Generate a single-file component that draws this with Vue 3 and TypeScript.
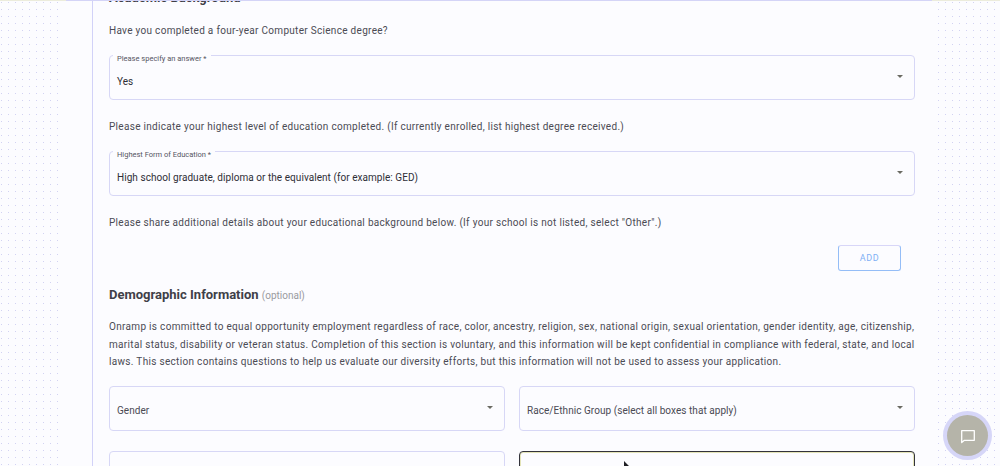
<script setup lang="ts">
interface Option {
  label: string
}

const demographics: Option[] = [
  { label: 'Gender' },
  { label: 'Race/Ethnic Group (select all boxes that apply)' }
]
</script>

<template>
  <div class="page">
    <div class="rule"></div>
    <div class="body">
      <div class="side"></div>
      <main class="panel">
        <div class="content">
          <h2 class="heading first">Academic Background</h2>
          <p class="question">Have you completed a four-year Computer Science degree?</p>
          <div class="select">
            <span class="float">Please specify an answer *</span>
            <span class="value">Yes</span>
            <i class="caret"></i>
          </div>
          <p class="question">Please indicate your highest level of education completed. (If currently enrolled, list highest degree received.)</p>
          <div class="select">
            <span class="float">Highest Form of Education *</span>
            <span class="value">High school graduate, diploma or the equivalent (for example: GED)</span>
            <i class="caret"></i>
          </div>
          <p class="question">Please share additional details about your educational background below. (If your school is not listed, select "Other".)</p>
          <div class="actions"><button class="add" type="button">ADD</button></div>
          <h2 class="heading demo">Demographic Information <span class="optional">(optional)</span></h2>
          <p class="blurb">Onramp is committed to equal opportunity employment regardless of race, color, ancestry, religion, sex, national origin, sexual orientation, gender identity, age, citizenship, marital status, disability or veteran status. Completion of this section is voluntary, and this information will be kept confidential in compliance with federal, state, and local laws. This section contains questions to help us evaluate our diversity efforts, but this information will not be used to assess your application.</p>
          <div class="grid">
            <div v-for="item in demographics" :key="item.label" class="select plain">
              <span class="value muted">{{ item.label }}</span>
              <i class="caret"></i>
            </div>
            <div class="select plain"></div>
            <div class="select plain focused"></div>
          </div>
        </div>
      </main>
      <div class="side"></div>
    </div>
    <svg class="cursor" width="12" height="16" viewBox="0 0 12 16"><path d="M0 0v14l3.4-3.2 2.4 5 2-1-2.3-4.8H10z" fill="#1f1f24" /></svg>
    <button class="chat" type="button" aria-label="Chat">
      <svg width="16" height="16" viewBox="0 0 16 16" fill="none"><path d="M1.7 2.7h12.6v9.6H4.4L1.7 14.6z" stroke="#fff" stroke-width="1.3" stroke-linejoin="round" /></svg>
    </button>
  </div>
</template>

<style>
html,
body {
  margin: 0;
  overflow: hidden;
}
</style>

<style scoped>
.page {
  position: relative;
  height: 466px;
  overflow: hidden;
  background: #fcfcff;
  font-family: Roboto, "Liberation Sans", sans-serif;
  color: #4b4b54;
}

.rule {
  height: 1px;
  background: linear-gradient(90deg, #ececdc 66px, #d4d4f7 66px, #d4d4f7 932px, #ececdc 932px);
}

.body {
  display: flex;
  justify-content: space-between;
  height: 465px;
}

.side {
  width: 63px;
  background-image: radial-gradient(circle at 1.5px 1.5px, #d2d2f2 0.7px, transparent 0.75px);
  background-size: 7px 7px;
}

.panel {
  box-sizing: border-box;
  width: 845px;
  margin-left: 29px;
  border-left: 1px solid #d2d2f8;
  overflow: hidden;
}

.content {
  width: 806px;
  margin: -12px 0 0 16px;
}

.heading {
  margin: 0;
  font-size: 13px;
  line-height: 18px;
  font-weight: 700;
  color: #3f3f48;
}

.heading.first {
  margin-bottom: -3px;
}

.question,
.blurb {
  margin: 0;
  font-size: 10px;
  line-height: 17.5px;
  letter-spacing: 0.3px;
}

.blurb {
  letter-spacing: 0.315px;
}

.question {
  padding: 18px 0 15.5px;
}

.select {
  position: relative;
  box-sizing: border-box;
  height: 45px;
  display: flex;
  align-items: center;
  padding: 7px 7px 0;
  border: 1px solid #d7d7f6;
  border-radius: 4px;
  font-size: 10px;
}

.select.plain {
  padding-top: 4px;
}

.float {
  position: absolute;
  top: -2px;
  left: 3px;
  padding: 0 4px;
  background: #fcfcff;
  font-size: 7.5px;
  line-height: 10px;
  color: #55555f;
}

.value {
  letter-spacing: 0.05px;
  color: #2e2e36;
}

.value.muted {
  color: #4a4a54;
}

.caret {
  position: absolute;
  right: 11px;
  top: 19px;
  border-left: 3px solid transparent;
  border-right: 3px solid transparent;
  border-top: 3px solid #6b6b63;
}

.actions {
  display: flex;
  justify-content: flex-end;
  padding-right: 14px;
  margin-top: -2px;
}

.add {
  box-sizing: border-box;
  width: 63px;
  height: 26px;
  padding: 0;
  background: transparent;
  border: 1px solid #94bdf7;
  border-top-color: #d8d6f8;
  border-radius: 3px;
  font: inherit;
  font-size: 9px;
  letter-spacing: 0.6px;
  color: #7fb0f5;
}

.demo {
  margin-top: 15px;
}

.optional {
  font-size: 10px;
  font-weight: 400;
  color: #9a9aa0;
}

.blurb {
  margin-top: 13px;
}

.grid {
  display: grid;
  grid-template-columns: 396px 396px;
  gap: 20px 14px;
  margin-top: 15px;
}

.focused {
  border: 1px solid #33333b;
  box-shadow: inset 0 0 0 1px #e4e4b8;
}

.cursor {
  position: absolute;
  left: 624px;
  top: 461px;
}

.chat {
  position: absolute;
  left: 947px;
  top: 415px;
  width: 41px;
  height: 41px;
  padding: 0;
  display: flex;
  align-items: center;
  justify-content: center;
  background: #b5b4a9;
  border: 0;
  border-radius: 50%;
  box-shadow: 0 0 0 4px #d6d6f8;
}
</style>
